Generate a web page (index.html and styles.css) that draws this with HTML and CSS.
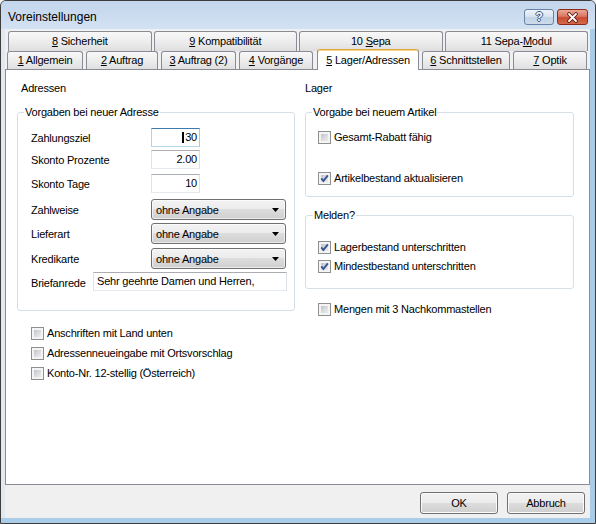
FILE: index.html
```html
<!DOCTYPE html>
<html lang="de">
<head>
<meta charset="utf-8">
<title>Voreinstellungen</title>
<link rel="stylesheet" href="styles.css">
</head>
<body>
<div class="window">
  <div class="titlebar">
    <span class="title">Voreinstellungen</span>
    <div class="tbtns">
      <div class="tbtn help">?</div>
      <div class="tbtn close">
        <svg width="13" height="11" viewBox="0 0 13 11"><path d="M3 2 L10 9 M10 2 L3 9" stroke="#5e1a10" stroke-width="3.6" stroke-linecap="round"/><path d="M3 2 L10 9 M10 2 L3 9" stroke="#ffffff" stroke-width="1.8" stroke-linecap="round"/></svg>
      </div>
    </div>
  </div>
  <div class="client">
    <div class="tabrow back">
      <div class="tab"><u>8</u> Sicherheit</div>
      <div class="tab"><u>9</u> Kompatibilität</div>
      <div class="tab">10 <u>S</u>epa</div>
      <div class="tab">11 Sepa-<u>M</u>odul</div>
    </div>
    <div class="tabrow front">
      <div class="tab t-allg"><u>1</u> Allgemein</div>
      <div class="tab t-auf"><u>2</u> Auftrag</div>
      <div class="tab t-auf2"><u>3</u> Auftrag (2)</div>
      <div class="tab t-vor"><u>4</u> Vorgänge</div>
      <div class="tab t-lag active"><u>5</u> Lager/Adressen</div>
      <div class="tab t-sch"><u>6</u> Schnittstellen</div>
      <div class="tab t-opt"><u>7</u> Optik</div>
    </div>
    <div class="panel">
      <div class="col">
        <div class="heading">Adressen</div>
        <div class="group group-addr">
          <div class="legend">Vorgaben bei neuer Adresse</div>
          <div class="form">
            <div class="lbl">Zahlungsziel</div>
            <div class="num focus"><span class="caret"></span>30</div>
            <div class="lbl">Skonto Prozente</div>
            <div class="num">2.00</div>
            <div class="lbl">Skonto Tage</div>
            <div class="num">10</div>
            <div class="lbl lbl-sel">Zahlweise</div>
            <div class="combo"><span>ohne Angabe</span><svg class="arrow" width="7" height="4" viewBox="0 0 7 4"><polygon points="0,0 7,0 3.5,4" fill="#000"/></svg></div>
            <div class="lbl lbl-sel">Lieferart</div>
            <div class="combo"><span>ohne Angabe</span><svg class="arrow" width="7" height="4" viewBox="0 0 7 4"><polygon points="0,0 7,0 3.5,4" fill="#000"/></svg></div>
            <div class="lbl lbl-sel">Kredikarte</div>
            <div class="combo"><span>ohne Angabe</span><svg class="arrow" width="7" height="4" viewBox="0 0 7 4"><polygon points="0,0 7,0 3.5,4" fill="#000"/></svg></div>
          </div>
          <div class="brief-row">
            <div class="lbl-brief">Briefanrede</div>
            <div class="brief">Sehr geehrte Damen und Herren,</div>
          </div>
        </div>
        <div class="checks-left">
          <div class="chk"><span class="cb"></span><span>Anschriften mit Land unten</span></div>
          <div class="chk"><span class="cb"></span><span>Adressenneueingabe mit Ortsvorschlag</span></div>
          <div class="chk"><span class="cb"></span><span>Konto-Nr. 12-stellig (Österreich)</span></div>
        </div>
      </div>
      <div class="col">
        <div class="heading heading-r">Lager</div>
        <div class="group group-art">
          <div class="legend">Vorgabe bei neuem Artikel</div>
          <div class="rows rows-art">
            <div class="chk"><span class="cb"></span><span>Gesamt-Rabatt fähig</span></div>
            <div class="chk"><span class="cb"><svg width="11" height="11" viewBox="0 0 11 11"><polyline points="2.3,5.4 4.4,7.9 8.9,2.4" fill="none" stroke="#3a5791" stroke-width="1.9"/></svg></span><span>Artikelbestand aktualisieren</span></div>
          </div>
        </div>
        <div class="group group-mel">
          <div class="legend legend-r2">Melden?</div>
          <div class="rows rows-mel">
            <div class="chk"><span class="cb"><svg width="11" height="11" viewBox="0 0 11 11"><polyline points="2.3,5.4 4.4,7.9 8.9,2.4" fill="none" stroke="#3a5791" stroke-width="1.9"/></svg></span><span>Lagerbestand unterschritten</span></div>
            <div class="chk"><span class="cb"><svg width="11" height="11" viewBox="0 0 11 11"><polyline points="2.3,5.4 4.4,7.9 8.9,2.4" fill="none" stroke="#3a5791" stroke-width="1.9"/></svg></span><span>Mindestbestand unterschritten</span></div>
          </div>
        </div>
        <div class="chk mengen"><span class="cb"></span><span>Mengen mit 3 Nachkommastellen</span></div>
      </div>
    </div>
    <div class="footer">
      <div class="btn">OK</div>
      <div class="btn">Abbruch</div>
    </div>
  </div>
</div>
</body>
</html>
```
FILE: styles.css
```css
html, body {
  margin: 0;
  background: #f0f0f0;
}
body {
  font-family: "Liberation Sans", Arial, sans-serif;
  font-size: 11px;
  letter-spacing: -0.2px;
  color: #000;
}
.window {
  width: 596px;
  height: 524px;
  box-sizing: border-box;
  border: 1px solid #3d3d3d;
  border-radius: 6px 6px 0 0;
  background: #a9cde9;
  display: flex;
  flex-direction: column;
  overflow: hidden;
}
.titlebar {
  height: 28px;
  flex: none;
  display: flex;
  align-items: flex-start;
  background: linear-gradient(#c3d6ed, #d3e1f2);
}
.title {
  font-size: 12px;
  letter-spacing: 0;
  line-height: 14px;
  margin: 9px 0 0 7px;
}
.tbtns {
  margin: 8px 7px 0 auto;
  display: flex;
  gap: 3px;
}
.tbtn {
  height: 16px;
  box-sizing: border-box;
  border-radius: 3px;
  display: flex;
  align-items: center;
  justify-content: center;
}
.help {
  width: 30px;
  border: 1px solid #6883a6;
  background: linear-gradient(#eef3f9 0%, #d9e4f1 45%, #c2d2e6 55%, #cddbec 100%);
  font-weight: bold;
  font-size: 12px;
  line-height: 14px;
  color: #fff;
  text-shadow: 1px 0 0 #3b5576, -1px 0 0 #3b5576, 0 1px 0 #3b5576, 0 -1px 0 #3b5576;
}
.close {
  width: 31px;
  border: 1px solid #8b2b1c;
  background: linear-gradient(#eaa896 0%, #db7760 45%, #c84b32 55%, #d4694d 100%);
}
.client {
  flex: 1;
  display: flex;
  flex-direction: column;
  background: #f0f0f0;
  margin: 0 5px 5px 0;
  border-left: 4px solid #e3e9f0;
  min-height: 0;
}
.tabrow {
  display: flex;
  flex: none;
}
.back {
  gap: 2px;
  margin: 2px 2px 0 3px;
  height: 20px;
}
.tab {
  box-sizing: border-box;
  border: 1px solid #898c95;
  border-bottom: none;
  border-radius: 3px 3px 0 0;
  background: linear-gradient(#f8f8f8 0%, #ededed 50%, #dfdfdf 100%);
  text-align: center;
  white-space: nowrap;
}
.back .tab {
  flex: 1;
  line-height: 18px;
}
.front {
  gap: 3px;
  margin-left: 2px;
  height: 18px;
  align-items: flex-start;
}
.front .tab {
  height: 18px;
  line-height: 17px;
}
.t-allg { width: 76px; }
.t-auf { width: 72px; }
.t-auf2 { width: 75px; }
.t-vor { width: 74px; }
.t-lag { width: 102px; }
.t-sch { width: 88px; }
.t-opt { width: 74px; }
.front .tab.active {
  height: 21px;
  margin: -2px 0 -1px 1px;
  padding-top: 2px;
  background: #fff;
  border-top-color: #e0a83a;
  box-shadow: inset 0 1px 0 #f7d68e;
  z-index: 1;
}
.panel {
  flex: 1;
  min-height: 0;
  border: 1px solid #898c95;
  background: #fff;
  display: grid;
  grid-template-columns: 278px 269px;
  column-gap: 10px;
  align-content: start;
  padding: 12px 0 0 11px;
}
.heading {
  line-height: 13px;
  margin-left: 4px;
}
.heading-r {
  margin-left: 0;
}
.group {
  margin-top: 17px;
  border: 1px solid #d5dfe5;
  border-radius: 3px;
}
.legend {
  width: fit-content;
  margin: -7px 0 0 6px;
  padding: 0 1px;
  background: #fff;
  line-height: 13px;
}
.legend-r2 {
  margin-left: 7px;
}
.group-addr {
  padding-bottom: 17px;
}
.form {
  display: grid;
  grid-template-columns: 120px auto;
  grid-template-rows: 22px 24px 25px 24px 25px 24px;
  margin: 9px 0 0 13px;
}
.lbl {
  line-height: 19px;
  padding-top: 1px;
}
.lbl-sel {
  line-height: 21px;
}
.num, .brief {
  height: 19px;
  box-sizing: border-box;
  border: 1px solid;
  border-color: #abadb3 #dbdfe6 #e3e9ef #e2e3ea;
  background: #fff;
  line-height: 17px;
}
.num {
  width: 49px;
  text-align: right;
  padding-right: 2px;
}
.num.focus {
  border-color: #3d7bad #a4c9e3 #b7d9ed #b5cfe7;
}
.caret {
  display: inline-block;
  width: 2px;
  height: 11px;
  background: #000;
  vertical-align: -2px;
  margin-right: 1px;
}
.combo {
  width: 135px;
  height: 21px;
  box-sizing: border-box;
  border: 1px solid #707070;
  border-radius: 3px;
  background: linear-gradient(#f3f3f3 0%, #ebebeb 50%, #dddddd 50%, #cfcfcf 100%);
  box-shadow: inset 0 0 0 1px rgba(255, 255, 255, 0.6);
  display: flex;
  align-items: center;
  justify-content: space-between;
  padding: 0 6px 0 4px;
}
.brief-row {
  display: flex;
  margin-left: 13px;
}
.lbl-brief {
  width: 62px;
  line-height: 19px;
  padding-top: 2px;
}
.brief {
  width: 194px;
  padding-left: 3px;
}
.checks-left {
  margin: 16px 0 0 14px;
  display: flex;
  flex-direction: column;
  gap: 7px;
}
.chk {
  display: flex;
  align-items: center;
  gap: 3px;
  height: 13px;
  line-height: 13px;
  white-space: nowrap;
}
.cb {
  flex: none;
  width: 13px;
  height: 13px;
  box-sizing: border-box;
  border: 1px solid #8e8f8f;
  background: linear-gradient(135deg, #b4b8be 0%, #dfe1e4 60%, #f2f3f4 100%);
  box-shadow: inset 0 0 0 2px #f4f4f4;
  display: flex;
}
.rows {
  display: flex;
  flex-direction: column;
  margin-left: 12px;
}
.rows-art {
  margin-top: 12px;
  gap: 28px;
}
.group-art {
  padding-bottom: 11px;
}
.group-mel {
  margin-top: 18px;
  padding-bottom: 15px;
}
.rows-mel {
  margin-top: 19px;
  gap: 6px;
}
.mengen {
  margin: 14px 0 0 13px;
}
.footer {
  height: 33px;
  flex: none;
  box-sizing: border-box;
  display: flex;
  justify-content: flex-end;
  gap: 9px;
  padding: 7px 5px 0 0;
}
.btn {
  width: 78px;
  height: 22px;
  box-sizing: border-box;
  border: 1px solid #707070;
  border-radius: 3px;
  background: linear-gradient(#f2f2f2 0%, #ebebeb 50%, #dddddd 50%, #cfcfcf 100%);
  box-shadow: inset 0 0 0 1px #fbfbfb;
  display: flex;
  align-items: center;
  justify-content: center;
}
```
